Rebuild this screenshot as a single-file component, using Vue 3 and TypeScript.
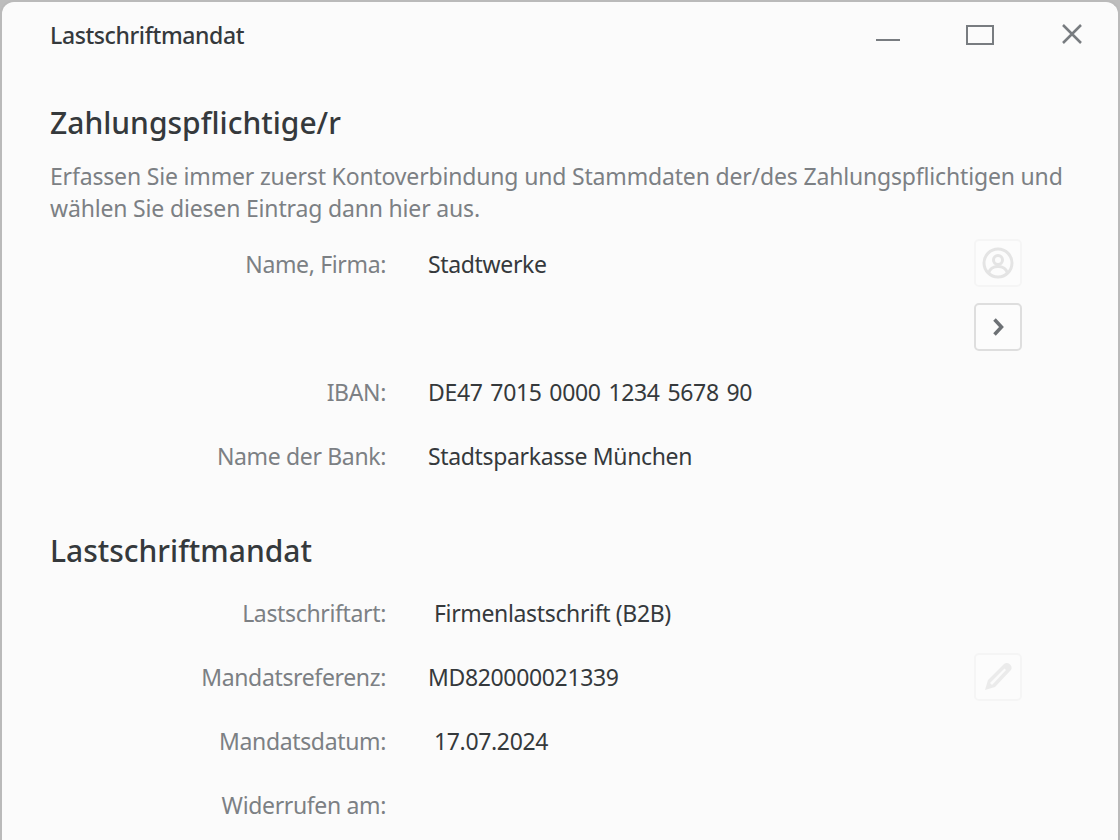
<script setup lang="ts">
interface Row { label: string; value: string; indent?: boolean; iban?: boolean; action?: 'person' | 'pencil' | 'arrow' }
const payer: Row[] = [
  { label: 'Name, Firma:', value: 'Stadtwerke', action: 'person' },
  { label: '', value: '', action: 'arrow' },
  { label: 'IBAN:', value: 'DE47 7015 0000 1234 5678 90', iban: true },
  { label: 'Name der Bank:', value: 'Stadtsparkasse München' },
]
const mandate: Row[] = [
  { label: 'Lastschriftart:', value: 'Firmenlastschrift (B2B)', indent: true },
  { label: 'Mandatsreferenz:', value: 'MD820000021339', action: 'pencil' },
  { label: 'Mandatsdatum:', value: '17.07.2024', indent: true },
  { label: 'Widerrufen am:', value: '' },
]
const sections = [
  { title: 'Zahlungspflichtige/r', text: 'Erfassen Sie immer zuerst Kontoverbindung und Stammdaten der/des Zahlungspflichtigen und wählen Sie diesen Eintrag dann hier aus.', rows: payer },
  { title: 'Lastschriftmandat', text: '', rows: mandate },
]
</script>

<template>
  <div class="window">
    <header class="titlebar">
      <span class="window-title">Lastschriftmandat</span>
      <div class="controls">
        <svg class="minimize" width="26" height="2" viewBox="0 0 26 2"><path d="M1 1h24" /></svg>
        <svg class="maximize" width="28" height="20" viewBox="0 0 28 20"><rect x="1" y="1" width="26" height="18" /></svg>
        <svg class="close" width="22" height="22" viewBox="0 0 22 22"><path d="M2 2l18 18M20 2L2 20" /></svg>
      </div>
    </header>
    <section v-for="s in sections" :key="s.title" class="section">
      <h2>{{ s.title }}</h2>
      <p v-if="s.text" class="intro">{{ s.text }}</p>
      <div class="rows">
        <div v-for="(r, i) in s.rows" :key="i" class="row">
          <span class="label">{{ r.label }}</span>
          <span class="value" :class="{ indent: r.indent, iban: r.iban }">{{ r.value }}</span>
          <button v-if="r.action" class="action" :class="{ active: r.action === 'arrow' }" type="button" :aria-label="r.action">
            <svg v-if="r.action === 'person'" width="32" height="32" viewBox="0 0 32 32" class="dim"><circle cx="16" cy="16" r="14" /><circle cx="16" cy="13" r="4.500" /><path d="M6.500 26c1.500-4.500 5-6.500 9.500-6.500s8 2 9.500 6.500" /></svg>
            <svg v-else-if="r.action === 'pencil'" width="32" height="32" viewBox="0 0 32 32" class="pencil"><path d="M3 29l3-10L22 3c1.500-1.500 4-1.500 5.500 0l1 1c1.500 1.500 1.500 4 0 5.500L13 26z" /><path class="hole" d="M8 22L22.500 7.500l1.500 1.500L10 24z" /></svg>
            <svg v-else width="16" height="20" viewBox="0 0 16 20" class="arrow"><path d="M4.500 2.500l7 7.500-7 7.500" /></svg>
          </button>
        </div>
      </div>
    </section>
  </div>
</template>

<style>
html, body { margin: 0; background: #bdbdbd; overflow: hidden; }
</style>

<style scoped>
.window {
  box-sizing: border-box;
  width: 1120px;
  height: 840px;
  overflow: hidden;
  background: #fbfbfb;
  border: 2px solid #bababa;
  border-bottom: 0;
  border-radius: 14px 14px 0 0;
  font-family: "Noto Sans", "Open Sans", sans-serif;
  color: #35393c;
}
.titlebar {
  height: 66px;
  padding: 0 35px 0 48px;
  display: flex;
  align-items: center;
  justify-content: space-between;
}
.window-title { font-size: 23px; font-weight: 500; letter-spacing: -0.4px; }
.controls { display: flex; align-items: flex-start; align-self: flex-start; margin-top: 21px; }
.controls svg { display: block; fill: none; stroke: #787c80; stroke-width: 2; flex: none; }
.minimize { margin-top: 16px; }
.maximize { margin: 2px 0 0 65px; }
.controls .close { margin: 0 0 0 67px; stroke-width: 2.5; }
.section { padding: 0 48px; }
.section h2 {
  margin: 0;
  font-size: 30px;
  line-height: 40px;
  font-weight: 500;
}
.section:first-of-type h2 { margin-top: 35px; }
.section + .section { margin-top: 44px; }
.intro {
  margin: 17px 0 0;
  font-size: 23px;
  line-height: 32px;
  color: #7c8084;
  letter-spacing: -0.17px;
}
.rows { margin-top: 7px; }
.section + .section .rows { margin-top: 10px; }
.row {
  height: 64px;
  display: grid;
  grid-template-columns: 336px 588px 48px;
  align-items: center;
  font-size: 23px;
  letter-spacing: -0.35px;
}
.section:first-of-type .row > span { padding-top: 2px; }
.label { text-align: right; color: #7c8084; }
.value { padding-left: 42px; }
.value.indent { padding-left: 48px; }
.value.iban { word-spacing: 2.2px; }
.action {
  grid-column: 3;
  box-sizing: border-box;
  width: 48px;
  height: 48px;
  padding: 0;
  display: flex;
  align-items: center;
  justify-content: center;
  background: #fcfcfc;
  border: 2px solid #f5f5f5;
  border-radius: 5px;
}
.action.active { border-color: #dedede; }
.dim { fill: none; stroke: #e4e4e4; stroke-width: 3; }
.pencil path { fill: #ebebeb; }
.pencil .hole { fill: #fbfbfb; }
.arrow { fill: none; stroke: #6d7175; stroke-width: 3.5; }
</style>
